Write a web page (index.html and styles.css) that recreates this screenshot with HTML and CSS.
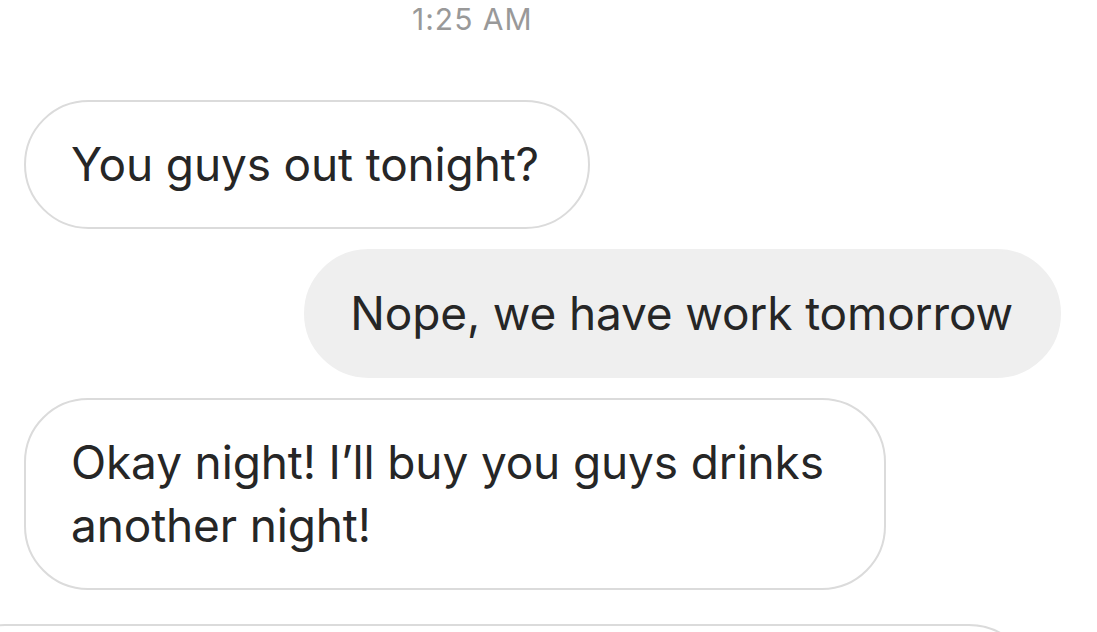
FILE: index.html
```html
<!DOCTYPE html>
<html>
<head>
<meta charset="utf-8">
<link rel="stylesheet" href="styles.css">
</head>
<body>
<div class="thread">
  <div class="time">1:25 AM</div>
  <div class="row left">
    <div class="bubble outline">You guys out tonight?</div>
  </div>
  <div class="row right">
    <div class="bubble filled">Nope, we have work tomorrow</div>
  </div>
  <div class="row left">
    <div class="bubble outline wide">Okay night! I’ll buy you guys drinks another night!</div>
  </div>
  <div class="composer"></div>
</div>
</body>
</html>
```

FILE: styles.css
```css
html, body {
  margin: 0;
  padding: 0;
  background: #ffffff;
}

.thread {
  display: flex;
  flex-direction: column;
  height: 632px;
  overflow: hidden;
  font-family: Inter, "Liberation Sans", Arial, sans-serif;
  color: #262626;
}

.time {
  align-self: flex-start;
  margin-left: 412px;
  padding-top: 1px;
  height: 40px;
  flex-shrink: 0;
  font-size: 30px;
  line-height: 36px;
  color: #999999;
  letter-spacing: 1px;
}

.row {
  display: flex;
  margin-top: 20px;
  flex-shrink: 0;
}

.row.left {
  justify-content: flex-start;
  padding-left: 24px;
}

.row.right {
  justify-content: flex-end;
  padding-right: 36px;
}

.time + .row {
  margin-top: 59px;
}

.bubble {
  box-sizing: border-box;
  font-size: 46px;
  line-height: 63px;
  padding: 31px 49px 31px 45px;
  border: 2px solid transparent;
  border-radius: 65px;
  letter-spacing: -0.15px;
}

.outline {
  background: #ffffff;
  border-color: #dbdbdb;
}

.filled {
  background: #efefef;
  border-color: #efefef;
  padding-left: 44px;
  padding-right: 46px;
}

.wide {
  max-width: 862px;
  border-radius: 64px;
}

.composer {
  box-sizing: border-box;
  margin-top: 34px;
  margin-left: -60px;
  width: 1094px;
  height: 130px;
  border: 2px solid #dbdbdb;
  border-radius: 65px;
  flex-shrink: 0;
}
```
